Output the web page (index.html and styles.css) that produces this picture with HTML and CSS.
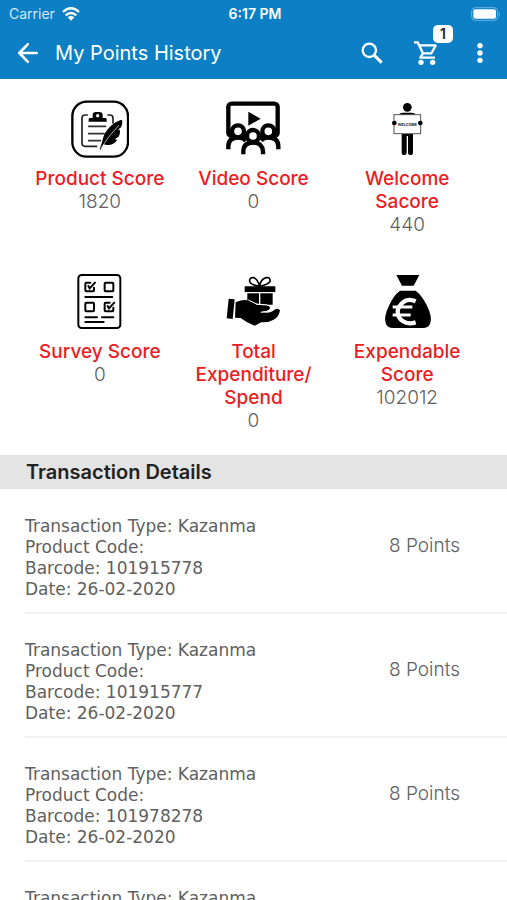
FILE: index.html
```html
<!DOCTYPE html>
<html lang="en">
<head>
<meta charset="utf-8">
<meta name="viewport" content="width=device-width, initial-scale=1">
<title>My Points History</title>
<link rel="stylesheet" href="styles.css">
</head>
<body>
<div class="app">
  <header class="top">
    <div class="status">
      <div class="status-carrier">
        <span>Carrier</span>
        <svg class="wifi" viewBox="0 0 54 42" aria-hidden="true">
          <g fill="none" stroke="#fff" stroke-width="7">
            <path d="M3 15Q27-7 51 15"/>
            <path d="M11 25Q27 11 43 25"/>
          </g>
          <path d="M17 31Q27 22 37 31L27 41Z" fill="#fff"/>
        </svg>
      </div>
      <span class="status-time">6:17 PM</span>
      <svg class="battery" viewBox="0 0 90 42" aria-hidden="true">
        <rect x="2" y="2" width="78" height="38" rx="11" fill="none" stroke="#69b3df" stroke-width="3"/>
        <rect x="7" y="7" width="68" height="28" rx="6" fill="#fff"/>
        <path d="M84 14Q90 21 84 28Z" fill="#69b3df"/>
      </svg>
    </div>
    <nav class="bar">
      <button class="icon-button" type="button" aria-label="Back">
        <svg class="back" viewBox="0 0 60 60" fill="none" stroke="#fff" stroke-width="8" stroke-linecap="round" stroke-linejoin="round"><path d="M29 4L4 30L29 56M4 30H56"/></svg>
      </button>
      <h1 class="title">My Points History</h1>
      <button class="icon-button" type="button" aria-label="Search">
        <svg class="search" viewBox="0 0 66 66" fill="none" stroke="#fff"><circle cx="25" cy="25" r="20" stroke-width="7"/><path d="M40 40L62 62" stroke-width="9"/></svg>
      </button>
      <button class="icon-button cart" type="button" aria-label="Cart">
        <svg class="cart-icon" viewBox="0 0 72 72" fill="none" stroke="#fff" stroke-width="7">
          <path d="M0 4H11L27 37H52L66 12"/>
          <path d="M15 13H66M27 37L19 50H63" stroke-linejoin="round"/>
          <circle cx="21" cy="64" r="8" fill="#fff" stroke="none"/>
          <circle cx="56" cy="64" r="8" fill="#fff" stroke="none"/>
        </svg>
        <span class="badge">1</span>
      </button>
      <button class="icon-button" type="button" aria-label="More options">
        <svg class="more" viewBox="0 0 18 60" fill="#fff"><circle cx="9" cy="8" r="8"/><circle cx="9" cy="30" r="8"/><circle cx="9" cy="52" r="8"/></svg>
      </button>
    </nav>
  </header>

  <main>
    <section class="scores" aria-label="Scores">
      <div class="score">
        <svg class="score-icon" viewBox="154 28 174 174" aria-hidden="true">
          <rect x="158" y="33" width="167" height="165" rx="43" fill="none" stroke="#000" stroke-width="7"/>
          <path d="M203 73H196Q187 73 187 82V158Q187 167 196 167H231M265 73H271Q280 73 280 82V97" fill="none" stroke="#222" stroke-width="5" stroke-linecap="round"/>
          <path d="M207 93V86Q207 82 212 82H219V74Q219 64 229 64H239Q249 64 249 74V82H256Q261 82 261 86V93Z"/>
          <circle cx="234" cy="75" r="5" fill="#fff"/>
          <path d="M207 107H258M207 129H253M207 150H242" fill="none" stroke="#333" stroke-width="5" stroke-linecap="round"/>
          <path d="M307 87C286 91 263 111 253 134C248 146 250 152 240 175L243 177L252 161C267 168 289 158 292 147L285 146L297 138C301 130 302 122 300 117L295 117L304 110C308 101 309 94 307 87Z"/>
          <path d="M243 174Q264 139 298 103" fill="none" stroke="#fff" stroke-width="2"/>
        </svg>
        <h2 class="score-name">Product Score</h2>
        <p class="score-value">1820</p>
      </div>
      <div class="score">
        <svg class="score-icon" viewBox="134 30 174 174" aria-hidden="true">
          <rect x="147" y="41" width="148" height="97" rx="10" fill="none" stroke="#000" stroke-width="13"/>
          <path d="M207 65L244 86L207 107Z"/>
          <path d="M147 178V169Q147 143 176 143Q191 143 200 152M245 152Q253 143 267 143Q297 143 297 169V178" fill="#fff" stroke="#000" stroke-width="13"/>
          <circle cx="176" cy="124" r="18" fill="#fff" stroke="#000" stroke-width="13"/>
          <circle cx="267" cy="124" r="18" fill="#fff" stroke="#000" stroke-width="13"/>
          <path d="M192 193V185Q192 158 221 158T251 185V193" fill="#fff" stroke="#000" stroke-width="13"/>
          <circle cx="221" cy="138" r="18" fill="#fff" stroke="#000" stroke-width="13"/>
        </svg>
        <h2 class="score-name">Video Score</h2>
        <p class="score-value">0</p>
      </div>
      <div class="score">
        <svg class="score-icon" viewBox="115 30 174 174" aria-hidden="true">
          <circle cx="203" cy="52" r="13"/>
          <path d="M176 75Q181 68 191 68H215Q225 68 230 75Z"/>
          <path d="M186 132H220V188Q220 195 212 195Q205 195 205 188V138H201V188Q201 195 194 195Q186 195 186 188Z"/>
          <rect x="163" y="74" width="80" height="57" fill="#fff" stroke="#555" stroke-width="3"/>
          <circle cx="164" cy="99" r="7"/><circle cx="242" cy="99" r="7"/>
          <text class="sign" x="203" y="108" text-anchor="middle">WELCOME</text>
        </svg>
        <h2 class="score-name">Welcome Sacore</h2>
        <p class="score-value">440</p>
      </div>
      <div class="score">
        <svg class="score-icon" viewBox="154 24 174 174" fill="none" stroke="#000" stroke-width="6" stroke-linecap="round" aria-hidden="true">
          <rect x="176" y="30" width="126" height="159" rx="10"/>
          <path d="M212 53H200Q197 53 197 56V76Q197 79 200 79H220Q223 79 223 76V68M206 63L210 70L226 53"/>
          <rect x="255" y="53" width="26" height="26" rx="3"/>
          <path d="M197 96H278"/>
          <rect x="197" y="113" width="26" height="26" rx="3"/>
          <path d="M270 113H258Q255 113 255 116V136Q255 139 258 139H278Q281 139 281 136V128M264 123L268 130L284 113"/>
          <path d="M197 157H232M247 157H281M197 171H252"/>
        </svg>
        <h2 class="score-name">Survey Score</h2>
        <p class="score-value">0</p>
      </div>
      <div class="score">
        <svg class="score-icon" viewBox="134 24 174 174" aria-hidden="true">
          <path d="M240 64Q213 59 211 49Q210 36 223 38Q236 42 240 64Q245 42 260 38Q274 36 272 49Q269 59 240 64" fill="none" stroke="#000" stroke-width="5"/>
          <path d="M196 64H288V81H196ZM204 85H239V116H204ZM243 85H280V119H243Z"/>
          <path d="M148 101L166 103L160 162L142 160Z"/>
          <path d="M169 112Q192 102 208 107L233 119Q252 121 266 121Q275 124 271 133Q267 139 245 141Q264 145 275 141Q284 137 289 132Q297 129 302 136Q299 157 283 164Q268 173 246 172L226 182L202 171L184 159L167 158Z"/>
          <path d="M207 105L234 118Q261 117 270 122Q277 128 271 135Q265 140 244 142" fill="none" stroke="#fff" stroke-width="3"/>
        </svg>
        <h2 class="score-name">Total Expenditure/ Spend</h2>
        <p class="score-value">0</p>
      </div>
      <div class="score">
        <svg class="score-icon" viewBox="115 24 174 174" aria-hidden="true">
          <path d="M170 30H239L222 62H187Z"/>
          <path d="M181 77H228Q247 92 261 120Q280 158 271 177Q266 189 249 189H161Q144 189 139 177Q130 158 149 120Q161 92 181 77Z"/>
          <path d="M228 109Q204 99 190 112Q174 125 174 141Q174 158 190 169Q205 179 228 172" fill="none" stroke="#fff" stroke-width="13"/>
          <path d="M159 126H218M159 150H213" fill="none" stroke="#fff" stroke-width="9"/>
        </svg>
        <h2 class="score-name">Expendable Score</h2>
        <p class="score-value">102012</p>
      </div>
    </section>

    <section>
      <h2 class="section-title">Transaction Details</h2>
      <ul class="transactions">
        <li class="transaction">
          <div class="details"><p>Transaction Type: Kazanma</p><p>Product Code:</p><p>Barcode: 101915778</p><p>Date: 26-02-2020</p></div>
          <p class="points">8 Points</p>
        </li>
        <li class="transaction">
          <div class="details"><p>Transaction Type: Kazanma</p><p>Product Code:</p><p>Barcode: 101915777</p><p>Date: 26-02-2020</p></div>
          <p class="points">8 Points</p>
        </li>
        <li class="transaction">
          <div class="details"><p>Transaction Type: Kazanma</p><p>Product Code:</p><p>Barcode: 101978278</p><p>Date: 26-02-2020</p></div>
          <p class="points">8 Points</p>
        </li>
        <li class="transaction">
          <div class="details"><p>Transaction Type: Kazanma</p></div>
        </li>
      </ul>
    </section>
  </main>
</div>
</body>
</html>
```
FILE: styles.css
```css
* {
  box-sizing: border-box;
}

body,
h1,
h2,
p,
ul {
  margin: 0;
  padding: 0;
}

body {
  background: #fff;
  color: #606060;
  font-family: Inter, "Liberation Sans", sans-serif;
}

svg {
  display: block;
}

.app {
  height: 100vh;
  overflow: hidden;
}

/* Header */
.top {
  background: #0c7fc5;
  color: #fff;
}

.status {
  display: grid;
  grid-template-columns: 1fr auto 1fr;
  align-items: center;
  height: 27px;
  padding: 0 6px 0 9px;
  font-size: 14px;
}

.status-carrier {
  display: flex;
  align-items: center;
  gap: 7px;
  color: #d5eaf7;
}

.status-time {
  font-weight: 600;
}

.wifi {
  width: 18px;
  height: 14px;
}

.battery {
  justify-self: end;
  width: 30px;
  height: 14px;
}

.bar {
  display: flex;
  align-items: center;
  height: 52px;
  padding: 0 24px 0 18px;
}

.title {
  flex: 1;
  padding-left: 17px;
  font-size: 20px;
  font-weight: 400;
  line-height: 24px;
}

.icon-button {
  padding: 0;
  border: 0;
  background: none;
}

.back {
  width: 20px;
  height: 20px;
}

.search {
  width: 22px;
  height: 22px;
}

.cart {
  position: relative;
  margin: 0 39px 0 31px;
}

.cart-icon {
  width: 24px;
  height: 24px;
}

.badge {
  position: absolute;
  top: -16px;
  right: -15px;
  width: 20px;
  border-radius: 5px;
  background: #fff;
  color: #222;
  font: 600 14px/18px Inter, sans-serif;
  text-align: center;
}

.more {
  width: 6px;
  height: 20px;
}

/* Scores */
.scores {
  display: grid;
  grid-template-columns: repeat(3, 1fr);
  row-gap: 37px;
  padding: 21px 23px 23px;
}

.score {
  text-align: center;
}

.score-icon {
  width: 58px;
  height: 58px;
  margin: 0 auto 9px;
}

.score-name {
  padding: 0 8px;
  color: #ec1c24;
  font-size: 19px;
  font-weight: 500;
  line-height: 23px;
}

.score-value {
  font-size: 19px;
  font-weight: 300;
  line-height: 23px;
}

.sign {
  fill: #222;
  font: 700 11px Inter, sans-serif;
}

/* Transactions */
.section-title {
  padding: 0 26px;
  background: #e4e4e4;
  color: #222;
  font-size: 20px;
  font-weight: 600;
  line-height: 34px;
}

.transactions {
  padding: 1px 0 0 25px;
  list-style: none;
}

.transaction {
  display: flex;
  align-items: flex-start;
  justify-content: space-between;
  padding: 26px 47px 12px 0;
  border-bottom: 2px solid #f1f1f1;
}

.details {
  font-family: "DejaVu Sans", sans-serif;
  font-size: 17px;
  line-height: 21px;
}

.points {
  padding-top: 18px;
  font-size: 19px;
  font-weight: 300;
  line-height: 24px;
}
```
